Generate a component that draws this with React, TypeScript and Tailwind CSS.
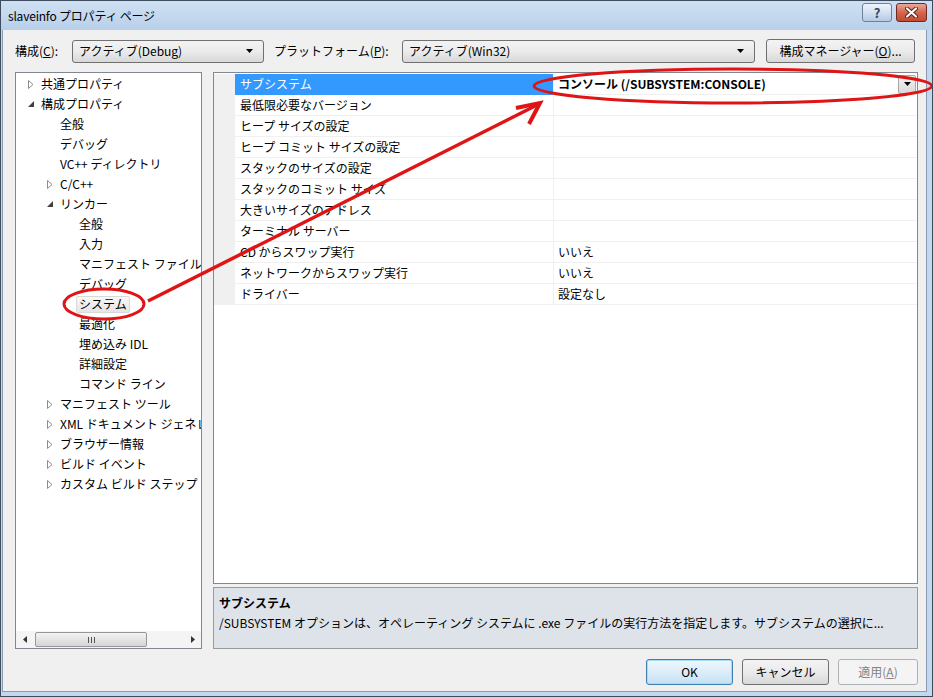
import React from 'react';

type TreeItem = { text: string; level: number; exp?: 'open' | 'closed'; selected?: boolean };

const treeItems: TreeItem[] = [
  { text: '共通プロパティ', level: 0, exp: 'closed' },
  { text: '構成プロパティ', level: 0, exp: 'open' },
  { text: '全般', level: 1 },
  { text: 'デバッグ', level: 1 },
  { text: 'VC++ ディレクトリ', level: 1 },
  { text: 'C/C++', level: 1, exp: 'closed' },
  { text: 'リンカー', level: 1, exp: 'open' },
  { text: '全般', level: 2 },
  { text: '入力', level: 2 },
  { text: 'マニフェスト ファイル', level: 2 },
  { text: 'デバッグ', level: 2 },
  { text: 'システム', level: 2, selected: true },
  { text: '最適化', level: 2 },
  { text: '埋め込み IDL', level: 2 },
  { text: '詳細設定', level: 2 },
  { text: 'コマンド ライン', level: 2 },
  { text: 'マニフェスト ツール', level: 1, exp: 'closed' },
  { text: 'XML ドキュメント ジェネレーター', level: 1, exp: 'closed' },
  { text: 'ブラウザー情報', level: 1, exp: 'closed' },
  { text: 'ビルド イベント', level: 1, exp: 'closed' },
  { text: 'カスタム ビルド ステップ', level: 1, exp: 'closed' },
];

const indent = ['pl-[10px]', 'pl-[29px]', 'pl-[48px]'];

const props: [string, string][] = [
  ['サブシステム', 'コンソール (/SUBSYSTEM:CONSOLE)'],
  ['最低限必要なバージョン', ''],
  ['ヒープ サイズの設定', ''],
  ['ヒープ コミット サイズの設定', ''],
  ['スタックのサイズの設定', ''],
  ['スタックのコミット サイズ', ''],
  ['大きいサイズのアドレス', ''],
  ['ターミナル サーバー', ''],
  ['CD からスワップ実行', 'いいえ'],
  ['ネットワークからスワップ実行', 'いいえ'],
  ['ドライバー', '設定なし'],
];

const DownArrow = () => (
  <svg width="7" height="4" viewBox="0 0 7 4">
    <path d="M0 0 H7 L3.5 4 Z" fill="#000" />
  </svg>
);

const Expander = ({ exp }: { exp?: 'open' | 'closed' }) => {
  if (exp === 'closed')
    return (
      <svg width="6" height="9" viewBox="0 0 6 9" className="ml-[2px]">
        <path d="M0.5 0.5 L5 4.5 L0.5 8.5 Z" fill="#fff" stroke="#8c8c8c" />
      </svg>
    );
  if (exp === 'open')
    return (
      <svg width="6" height="6" viewBox="0 0 6 6" className="ml-[2px]">
        <path d="M6 0 V6 H0 Z" fill="#404040" />
      </svg>
    );
  return null;
};

const Combo = ({ text, width }: { text: string; width: string }) => (
  <div
    className={`${width} h-[23px] flex items-center justify-between px-[6px] rounded-[3px] border border-[#707070] bg-linear-to-b from-[#f3f3f3] via-[#ebebeb] to-[#d8d8d8]`}
  >
    <span>{text}</span>
    <span className="mr-[4px]">
      <DownArrow />
    </span>
  </div>
);

export default function App() {
  return (
    <div className="relative w-[933px] h-[697px] overflow-hidden bg-[#c3d7ee] border border-[#3d4c5e] text-[12px] text-black font-['Noto_Sans_CJK_JP','Noto_Sans',sans-serif] leading-none">
      {/* Title bar */}
      <div className="h-[29px] flex items-center justify-between pl-[7px] pr-[5px] bg-linear-to-b from-[#cfe0f3] to-[#b9d0ea]">
        <span className="text-[12px] tracking-[-0.2px]">slaveinfo プロパティ ページ</span>
        <div className="flex gap-[4px] -mt-[6px]">
          <div className="w-[30px] h-[19px] rounded-[3px] border border-[#6f8199] bg-linear-to-b from-[#eef4fb] via-[#d3e1f1] to-[#b4c9e3] flex items-center justify-center text-[13px] font-bold text-[#33475f]">
            ?
          </div>
          <div className="w-[31px] h-[19px] rounded-[3px] border border-[#6b2a20] bg-linear-to-b from-[#e9a899] via-[#d4664f] to-[#c24a31] flex items-center justify-center">
            <svg width="13" height="11" viewBox="0 0 13 11">
              <path d="M2 1.5 L11 9.5 M11 1.5 L2 9.5" stroke="#5a1d14" strokeWidth="4" strokeLinecap="round" />
              <path d="M2 1.5 L11 9.5 M11 1.5 L2 9.5" stroke="#fff" strokeWidth="2.2" strokeLinecap="round" />
            </svg>
          </div>
        </div>
      </div>

      {/* Body */}
      <div className="absolute left-[1px] right-[5px] top-[29px] bottom-[4px] bg-[#f0f0f0] border-l border-b border-r border-[#8a9bb0] flex flex-col pl-[12px] pt-[9px]">
        {/* Toolbar */}
        <div className="flex items-center h-[24px]">
          <span className="w-[57px]">
            構成(<u>C</u>):
          </span>
          <Combo text="アクティブ(Debug)" width="w-[192px]" />
          <span className="ml-[10px] w-[128px]">
            プラットフォーム(<u>P</u>):
          </span>
          <Combo text="アクティブ(Win32)" width="w-[353px]" />
          <div className="ml-[11px] w-[149px] h-[24px] flex items-center justify-center rounded-[3px] border border-[#707070] bg-linear-to-b from-[#f3f3f3] via-[#ebebeb] to-[#d8d8d8]">
            構成マネージャー(<u>O</u>)...
          </div>
        </div>

        {/* Main panels */}
        <div className="flex mt-[9px] h-[577px] gap-[11px]">
          {/* Tree */}
          <div className="w-[187px] border border-[#828790] bg-white flex flex-col">
            <div className="flex-1 pt-[1px] overflow-hidden">
              {treeItems.map((it, i) => (
                <div key={i} className={`flex h-[20px] items-center whitespace-nowrap ${indent[it.level]}`}>
                  <span className="w-[15px] shrink-0 flex items-center">
                    <Expander exp={it.exp} />
                  </span>
                  {it.selected ? (
                    <span className="-ml-[3px] px-[2px] h-[17px] flex items-center rounded-[2px] border border-[#d9d9d9] bg-linear-to-b from-[#f8f8f8] to-[#e5e5e5]">
                      {it.text}
                    </span>
                  ) : (
                    <span>{it.text}</span>
                  )}
                </div>
              ))}
            </div>
            {/* Horizontal scrollbar */}
            <div className="h-[17px] bg-[#f4f4f4] flex items-center">
              <div className="w-[17px] flex justify-center">
                <svg width="4" height="7" viewBox="0 0 4 7">
                  <path d="M4 0 V7 L0 3.5 Z" fill="#333" />
                </svg>
              </div>
              <div className="ml-[2px] w-[112px] h-[15px] rounded-[2px] border border-[#979797] bg-linear-to-b from-[#f3f3f3] to-[#d5d5d5] flex items-center justify-center gap-[2px]">
                <span className="w-[1px] h-[6px] bg-[#555]" />
                <span className="w-[1px] h-[6px] bg-[#555]" />
                <span className="w-[1px] h-[6px] bg-[#555]" />
              </div>
              <div className="flex-1" />
              <div className="w-[17px] flex justify-center">
                <svg width="4" height="7" viewBox="0 0 4 7">
                  <path d="M0 0 V7 L4 3.5 Z" fill="#333" />
                </svg>
              </div>
            </div>
          </div>

          {/* Right side */}
          <div className="w-[705px] flex flex-col">
            <div className="flex-1 border border-[#828790] bg-white pt-[1px]">
              {props.map(([name, value], i) => (
                <div key={i} className="flex h-[21px]">
                  <div className="w-[21px] bg-[#f0f0f0]" />
                  <div
                    className={`w-[318px] flex items-center pl-[5px] whitespace-nowrap border-b ${
                      i === 0 ? 'bg-[#3399ff] text-white border-[#3399ff]' : 'border-[#f0f0f0]'
                    }`}
                  >
                    {name}
                  </div>
                  <div className="flex-1 flex items-center justify-between border-l border-b border-[#f0f0f0] pl-[4px]">
                    <span className={i === 0 ? 'font-bold' : ''}>{value}</span>
                    {i === 0 && (
                      <div className="w-[18px] h-[19px] mr-[1px] rounded-[2px] border border-[#a7a7a7] bg-linear-to-b from-[#f4f4f4] to-[#d9d9d9] flex items-center justify-center">
                        <DownArrow />
                      </div>
                    )}
                  </div>
                </div>
              ))}
            </div>
            <div className="mt-[3px] h-[62px] border border-[#9a9a9a] bg-[#dee3ea] px-[5px] pt-[5px]">
              <div className="font-bold h-[20px] flex items-center">サブシステム</div>
              <div className="h-[20px] flex items-center whitespace-nowrap overflow-hidden">
                /SUBSYSTEM オプションは、オペレーティング システムに .exe ファイルの実行方法を指定します。サブシステムの選択に...
              </div>
            </div>
          </div>
        </div>

        {/* Buttons */}
        <div className="flex justify-end gap-[9px] mt-[10px] pr-[8px]">
          <div className="w-[87px] h-[26px] flex items-center justify-center rounded-[3px] border border-[#3c7fb1] bg-linear-to-b from-[#eef7fd] via-[#dcedf9] to-[#c4e2f6] shadow-[inset_0_0_0_1px_#a8dbf8]">
            OK
          </div>
          <div className="w-[87px] h-[26px] flex items-center justify-center rounded-[3px] border border-[#707070] bg-linear-to-b from-[#f3f3f3] via-[#ebebeb] to-[#d8d8d8]">
            キャンセル
          </div>
          <div className="w-[80px] h-[26px] flex items-center justify-center rounded-[3px] border border-[#adb2b5] bg-[#f4f4f4] text-[#838383]">
            適用(<u>A</u>)
          </div>
        </div>
      </div>

      {/* Red annotations */}
      <svg className="absolute inset-0 pointer-events-none" width="933" height="697" viewBox="0 0 933 697">
        <ellipse cx="103" cy="303" rx="40" ry="15" fill="none" stroke="#e01414" strokeWidth="3" />
        <ellipse cx="732" cy="85" rx="199" ry="17" fill="none" stroke="#e01414" strokeWidth="3" />
        <line x1="147" y1="300" x2="536" y2="104" stroke="#e01414" strokeWidth="3.5" />
        <polyline points="515,107 539,102 528,123" fill="none" stroke="#e01414" strokeWidth="4" strokeLinejoin="miter" />
      </svg>
    </div>
  );
}
